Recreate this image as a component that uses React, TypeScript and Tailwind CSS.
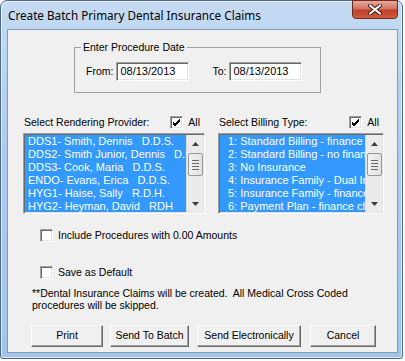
import React from "react";

const providers = [
  "DDS1- Smith, Dennis   D.D.S.",
  "DDS2- Smith Junior, Dennis   D.D.S.",
  "DDS3- Cook, Maria   D.D.S.",
  "ENDO- Evans, Erica   D.D.S.",
  "HYG1- Haise, Sally   R.D.H.",
  "HYG2- Heyman, David   RDH",
];

const billingTypes = [
  "1: Standard Billing - finance charge",
  "2: Standard Billing - no finance charge",
  "3: No Insurance",
  "4: Insurance Family - Dual Insurance",
  "5: Insurance Family - finance charge",
  "6: Payment Plan - finance charge",
];

function CheckBox({ checked }: { checked?: boolean }) {
  return (
    <span className="w-[13px] h-[13px] shrink-0 bg-white border border-[#a0a0a0] border-b-white border-r-white shadow-[inset_1px_1px_0_#696969,inset_-1px_-1px_0_#e3e3e3] flex items-center justify-center">
      {checked && (
        <svg width="9" height="9" viewBox="0 0 9 9">
          <path d="M1 4 L3 6 L8 1 M1 5 L3 7 L8 2 M1 6 L3 8 L8 3" stroke="#000" strokeWidth="1" fill="none" />
        </svg>
      )}
    </span>
  );
}

function ScrollBar() {
  return (
    <div className="w-[17px] shrink-0 bg-[#ebebeb] border-l border-[#dcdcdc] flex flex-col items-center">
      <div className="h-[17px] w-full flex items-center justify-center">
        <svg width="7" height="4" viewBox="0 0 7 4">
          <path d="M3.5 0 L7 4 L0 4 Z" fill="#3c3c3c" />
        </svg>
      </div>
      <div className="w-[15px] h-[23px] mt-[1px] rounded-[2px] border border-[#979797] bg-[linear-gradient(90deg,#f2f2f2,#e2e2e2)] flex flex-col items-center justify-center gap-[2px]">
        <span className="w-[7px] h-[1px] bg-[#6a6a6a]" />
        <span className="w-[7px] h-[1px] bg-[#6a6a6a]" />
        <span className="w-[7px] h-[1px] bg-[#6a6a6a]" />
        <span className="w-[7px] h-[1px] bg-[#6a6a6a]" />
      </div>
      <div className="flex-1" />
      <div className="h-[17px] w-full flex items-center justify-center">
        <svg width="7" height="4" viewBox="0 0 7 4">
          <path d="M0 0 L7 0 L3.5 4 Z" fill="#3c3c3c" />
        </svg>
      </div>
    </div>
  );
}

function ListBox({ items, width, indent }: { items: string[]; width: string; indent: string }) {
  return (
    <div
      className={`${width} h-[81px] flex bg-white border border-[#a0a0a0] border-b-white border-r-white shadow-[inset_1px_1px_0_#696969,inset_-1px_-1px_0_#e3e3e3] p-[1px]`}
    >
      <div className="flex-1 overflow-hidden bg-[#3399ff] text-white text-[11px] leading-[13px]">
        {items.map((item) => (
          <div key={item} className={`${indent} whitespace-pre`}>
            {item}
          </div>
        ))}
      </div>
      <ScrollBar />
    </div>
  );
}

function Button({ label, width }: { label: string; width: string }) {
  return (
    <button
      className={`${width} h-[22px] bg-[#f0f0f0] border border-white border-b-[#696969] border-r-[#696969] shadow-[inset_-1px_-1px_0_#a0a0a0] text-[10.5px] text-black`}
    >
      {label}
    </button>
  );
}

export default function App() {
  return (
    <div className="w-[405px] h-[361px] bg-white font-['Liberation_Sans',Arial,sans-serif] text-black">
      <div className="w-[403px] h-[359px] rounded-t-[7px] rounded-b-[3px] border border-[#4e6a8c] bg-[linear-gradient(180deg,#c5dbf3_0%,#aecbee_40%,#a4c4ea_100%)] shadow-[inset_0_0_0_1px_rgba(255,255,255,0.6)] flex flex-col px-[6px] pb-[5px] pr-[4px]">
        {/* Title bar */}
        <div className="h-[28px] flex items-start justify-between">
          <span className="pl-[1px] pt-[6px] text-[11.7px] text-black font-['Noto_Sans',sans-serif] leading-[16px]">
            Create Batch Primary Dental Insurance Claims
          </span>
          <div className="w-[46px] h-[19px] mt-[-1px] mr-[0px] rounded-b-[4px] border border-[#6d2a22] bg-[linear-gradient(180deg,#e9aa9e_0%,#d0745f_45%,#c0402b_55%,#d25a3f_100%)] flex items-center justify-center">
            <svg width="14" height="11" viewBox="0 0 14 11">
              <path d="M2 1.5 L12 9.5 M12 1.5 L2 9.5" stroke="#3b1a16" strokeWidth="4" strokeLinecap="round" />
              <path d="M2 1.5 L12 9.5 M12 1.5 L2 9.5" stroke="#ffffff" strokeWidth="2.2" strokeLinecap="round" />
            </svg>
          </div>
        </div>

        {/* Client area */}
        <div className="w-[391px] h-[324px] border border-[#7f9db9] bg-[#f0f0f0] text-[10.5px] flex flex-col">
          <fieldset className="ml-[66px] mt-[11px] w-[247px] border border-[#a0a0a0] pb-[11px]">
            <legend className="ml-[6px] px-[2px] leading-[13px]">Enter Procedure Date</legend>
            <div className="flex items-center mt-[8px] pl-[11px]">
              <span>From:</span>
              <div className="ml-[3px] w-[73px] h-[19px] bg-white border border-[#a0a0a0] border-b-white border-r-white shadow-[inset_1px_1px_0_#696969,inset_-1px_-1px_0_#e3e3e3] pl-[3px] flex items-center text-[11px]">
                08/13/2013
              </div>
              <span className="ml-[23px]">To:</span>
              <div className="ml-[3px] w-[73px] h-[19px] bg-white border border-[#a0a0a0] border-b-white border-r-white shadow-[inset_1px_1px_0_#696969,inset_-1px_-1px_0_#e3e3e3] pl-[3px] flex items-center text-[11px]">
                08/13/2013
              </div>
            </div>
          </fieldset>

          <div className="flex ml-[15px] mt-[23px] gap-[13px]">
            <div className="flex flex-col">
              <div className="h-[13px] flex items-center justify-between pl-[1px] pr-[5px]">
                <span>Select Rendering Provider:</span>
                <span className="flex items-center gap-[5px]">
                  <CheckBox checked />
                  <span>All</span>
                </span>
              </div>
              <div className="mt-[4px]">
                <ListBox items={providers} width="w-[182px]" indent="pl-[3px]" />
              </div>
            </div>
            <div className="flex flex-col">
              <div className="h-[13px] flex items-center justify-between pl-[1px] pr-[5px]">
                <span>Select Billing Type:</span>
                <span className="flex items-center gap-[5px]">
                  <CheckBox checked />
                  <span>All</span>
                </span>
              </div>
              <div className="mt-[4px]">
                <ListBox items={billingTypes} width="w-[166px]" indent="pl-[8px]" />
              </div>
            </div>
          </div>

          <div className="flex items-center ml-[32px] mt-[14px] gap-[5px]">
            <CheckBox />
            <span>Include Procedures with 0.00 Amounts</span>
          </div>
          <div className="flex items-center ml-[32px] mt-[21px] gap-[5px]">
            <CheckBox />
            <span>Save as Default</span>
          </div>

          <div className="ml-[24px] mt-[6px] leading-[12px]">
            <div className="whitespace-pre">**Dental Insurance Claims will be created.  All Medical Cross Coded</div>
            <div>procedures will be skipped.</div>
          </div>

          <div className="flex ml-[23px] mt-[14px]">
            <Button label="Print" width="w-[72px]" />
            <div className="ml-[7px]">
              <Button label="Send To Batch" width="w-[79px]" />
            </div>
            <div className="ml-[8px]">
              <Button label="Send Electronically" width="w-[104px]" />
            </div>
            <div className="ml-[9px]">
              <Button label="Cancel" width="w-[66px]" />
            </div>
          </div>
        </div>
      </div>
    </div>
  );
}
